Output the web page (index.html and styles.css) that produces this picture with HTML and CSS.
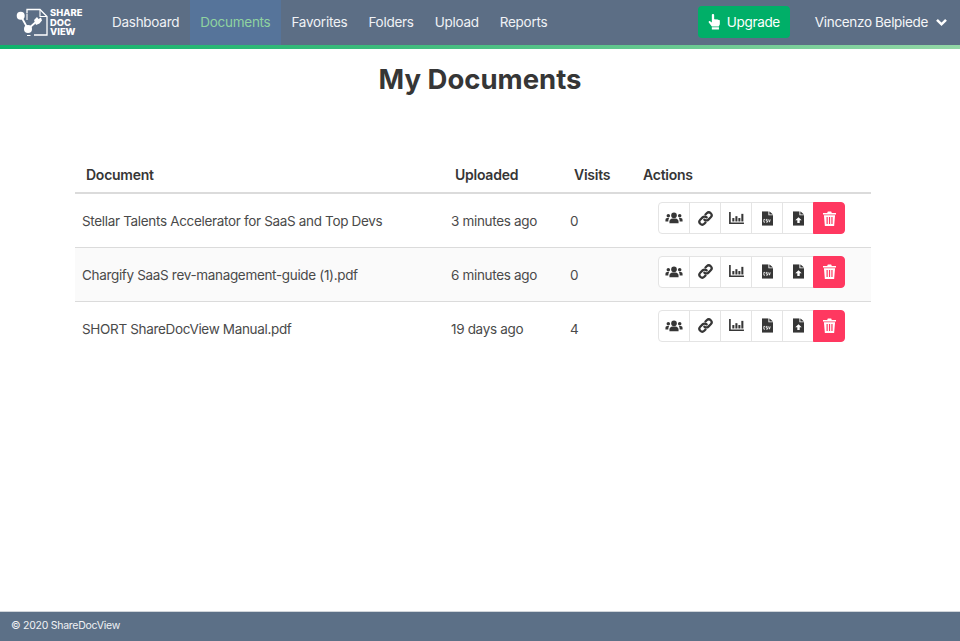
FILE: index.html
```html
<!DOCTYPE html>
<html lang="en">
<head>
<meta charset="utf-8">
<title>My Documents</title>
<link rel="stylesheet" href="styles.css">
</head>
<body>
<header class="navbar">
  <a class="brand">
    <svg class="brand-icon" viewBox="0 0 32 30" width="32" height="30">
      <path d="M11 5V1.500h13l7 7V27H18" fill="none" stroke="#fff" stroke-width="1.300"/>
      <path d="M24 1.500v7h7" fill="none" stroke="#fff" stroke-width="1.100"/>
      <path d="M11 5.500V12M14.500 27.500H11" fill="none" stroke="#fff" stroke-width="1.100"/>
      <path d="M4.700 7.700L12 21l9-8" fill="none" stroke="#fff" stroke-width="1.800"/>
      <circle cx="4.700" cy="7.700" r="4" fill="#fff"/>
      <circle cx="12" cy="21" r="4" fill="#fff"/>
      <path d="M18 12l3-3 1.500 2 2.500-1.500 1 3-2.500 3-3.500 1.500z" fill="#fff"/>
    </svg>
    <span class="brand-text">SHARE<br>DOC<br>VIEW</span>
  </a>
  <nav class="nav-links">
    <a class="nav-link">Dashboard</a>
    <a class="nav-link active">Documents</a>
    <a class="nav-link">Favorites</a>
    <a class="nav-link">Folders</a>
    <a class="nav-link">Upload</a>
    <a class="nav-link">Reports</a>
  </nav>
  <div class="nav-end">
    <a class="upgrade">
      <svg viewBox="0 0 14 18" width="13" height="16"><path fill="#fff" d="M4 1.200a1.300 1.300 0 0 1 2.600 0V6l1.100-.2 1 .4 1.200-.2 1.100.5L13 7v4.500L11.800 14H4L.6 9.500c-.7-1 .5-2.200 1.500-1.400L4 9.500zM4 15h8v2.500H4z"/></svg>
      <span>Upgrade</span>
    </a>
    <a class="user">
      <span>Vincenzo Belpiede</span>
      <svg viewBox="0 0 14 10" width="13" height="9"><path d="M2 2l5 5 5-5" fill="none" stroke="#fff" stroke-width="2.800"/></svg>
    </a>
  </div>
</header>
<div class="accent"></div>

<main class="content">
  <h1 class="title">My Documents</h1>
  <table class="docs">
    <colgroup><col class="c-doc"><col class="c-up"><col class="c-vis"><col class="c-act"></colgroup>
    <thead>
      <tr><th>Document</th><th>Uploaded</th><th>Visits</th><th>Actions</th></tr>
    </thead>
    <tbody>
      <tr>
        <td>Stellar Talents Accelerator for SaaS and Top Devs</td><td>3 minutes ago</td><td>0</td>
        <td class="action-cell"><div class="actions">
          <button class="act"><svg viewBox="0 0 20 16" width="18" height="14"><use href="#i-users"/></svg></button>
          <button class="act"><svg viewBox="0 0 16 16" width="15" height="15"><use href="#i-link"/></svg></button>
          <button class="act"><svg viewBox="0 0 16 14" width="15" height="13"><use href="#i-chart"/></svg></button>
          <button class="act"><svg viewBox="0 0 12 16" width="11" height="15"><use href="#i-csv"/></svg></button>
          <button class="act"><svg viewBox="0 0 12 16" width="11" height="15"><use href="#i-up"/></svg></button>
          <button class="act del"><svg viewBox="0 0 14 16" width="13" height="15"><use href="#i-trash"/></svg></button>
        </div></td>
      </tr>
      <tr>
        <td>Chargify SaaS rev-management-guide (1).pdf</td><td>6 minutes ago</td><td>0</td>
        <td class="action-cell"><div class="actions">
          <button class="act"><svg viewBox="0 0 20 16" width="18" height="14"><use href="#i-users"/></svg></button>
          <button class="act"><svg viewBox="0 0 16 16" width="15" height="15"><use href="#i-link"/></svg></button>
          <button class="act"><svg viewBox="0 0 16 14" width="15" height="13"><use href="#i-chart"/></svg></button>
          <button class="act"><svg viewBox="0 0 12 16" width="11" height="15"><use href="#i-csv"/></svg></button>
          <button class="act"><svg viewBox="0 0 12 16" width="11" height="15"><use href="#i-up"/></svg></button>
          <button class="act del"><svg viewBox="0 0 14 16" width="13" height="15"><use href="#i-trash"/></svg></button>
        </div></td>
      </tr>
      <tr>
        <td>SHORT ShareDocView Manual.pdf</td><td>19 days ago</td><td>4</td>
        <td class="action-cell"><div class="actions">
          <button class="act"><svg viewBox="0 0 20 16" width="18" height="14"><use href="#i-users"/></svg></button>
          <button class="act"><svg viewBox="0 0 16 16" width="15" height="15"><use href="#i-link"/></svg></button>
          <button class="act"><svg viewBox="0 0 16 14" width="15" height="13"><use href="#i-chart"/></svg></button>
          <button class="act"><svg viewBox="0 0 12 16" width="11" height="15"><use href="#i-csv"/></svg></button>
          <button class="act"><svg viewBox="0 0 12 16" width="11" height="15"><use href="#i-up"/></svg></button>
          <button class="act del"><svg viewBox="0 0 14 16" width="13" height="15"><use href="#i-trash"/></svg></button>
        </div></td>
      </tr>
    </tbody>
  </table>
</main>

<footer class="footer">© 2020 ShareDocView</footer>

<svg class="defs" width="0" height="0" aria-hidden="true">
  <symbol id="i-users" viewBox="0 0 20 16">
    <g fill="#363636">
      <circle cx="10" cy="5" r="3.200"/>
      <path d="M4.800 14v-2c0-2 1.600-3.500 3.400-3.500h3.600c1.800 0 3.400 1.500 3.400 3.500v2z"/>
      <circle cx="3.500" cy="5.500" r="2"/>
      <circle cx="16.500" cy="5.500" r="2"/>
      <path d="M0 12v-1.500C0 9 1 8 2.300 8h2.200C4 8.800 3.500 10 3.500 12zM20 12v-1.500C20 9 19 8 17.700 8h-2.200c.5.800 1 2 1 4z"/>
    </g>
  </symbol>
  <symbol id="i-link" viewBox="0 0 16 16">
    <g fill="none" stroke="#363636" stroke-width="2.400" stroke-linecap="round">
      <path d="M6.800 9.200a3 3 0 0 0 4.300 0l2.500-2.500a3 3 0 0 0-4.300-4.300L8 3.700"/>
      <path d="M9.200 6.800a3 3 0 0 0-4.300 0L2.400 9.300a3 3 0 0 0 4.300 4.300L8 12.300"/>
    </g>
  </symbol>
  <symbol id="i-chart" viewBox="0 0 16 14">
    <g fill="#363636">
      <path d="M0 0h1.800v11.200H16V13H0z"/>
      <rect x="3.500" y="6.500" width="2.200" height="3.700"/>
      <rect x="6.800" y="4.500" width="2.200" height="5.700"/>
      <rect x="10" y="6.500" width="2.200" height="3.700"/>
      <rect x="13.200" y="2" width="2.200" height="8.200"/>
    </g>
  </symbol>
  <symbol id="i-csv" viewBox="0 0 12 16">
    <path fill="#363636" d="M0 0h7v4.500h5V16H0zM8 0l4 3.500H8z"/>
    <path fill="none" stroke="#fff" stroke-width=".9" d="M3.300 9H2v3h1.300M6 9H4.500v1.500H6V12H4.500M7.200 9l.9 3 .9-3"/>
  </symbol>
  <symbol id="i-up" viewBox="0 0 12 16">
    <path fill="#363636" d="M0 0h7v4.500h5V16H0zM8 0l4 3.500H8z"/>
    <path fill="#fff" d="M6 6.500l3.500 3.500H7.300v3H4.700v-3H2.500z"/>
  </symbol>
  <symbol id="i-trash" viewBox="0 0 14 16">
    <path fill="#fff" d="M0 2h4.500l.7-1.500h3.600L9.500 2H14v1.700H0zM1 4.500h12L12 16H2zM3.800 6.500v7.500h1.300V6.500zM6.400 6.500v7.500h1.300V6.500zM9 6.500v7.500h1.300V6.500z" fill-rule="evenodd"/>
  </symbol>
</svg>
</body>
</html>
```

FILE: styles.css
```css
* { box-sizing: border-box; }
html, body { height: 100%; }
body {
  margin: 0;
  display: flex;
  flex-direction: column;
  min-height: 641px;
  font-family: Inter, "Liberation Sans", sans-serif;
  font-size: 13.500px;
  letter-spacing: -0.33px;
  color: #4a4a4a;
  background: #fff;
}
.navbar {
  display: flex;
  align-items: stretch;
  height: 45px;
  background: #5c6e85;
  color: #fff;
}
.brand {
  display: flex;
  align-items: center;
  gap: 2px;
  padding-left: 16px;
  width: 101.500px;
}
.brand-icon { flex: none; }
.brand-text {
  font-size: 9.400px;
  line-height: 9.500px;
  font-weight: 800;
  letter-spacing: 0;
}
.nav-links { display: flex; letter-spacing: -0.265px; }
.nav-link {
  display: flex;
  align-items: center;
  padding: 0 10.500px 2px;
  color: #f0f2f5;
}
.nav-link.active { background: #56749a; color: #8fd3a0; }
.nav-end {
  display: flex;
  align-items: center;
  margin-left: auto;
  padding: 0 12px 1px 0;
}
.upgrade {
  display: flex;
  align-items: center;
  gap: 6px;
  height: 32px;
  width: 92px;
  padding-left: 10px;
  margin-right: 25px;
  background: #00af68;
  border-radius: 4px;
}
.user { display: flex; align-items: center; gap: 7px; color: #f5f6f8; }
.accent {
  height: 4px;
  background: linear-gradient(90deg, #0fb36c 0%, #3dbb7c 40%, #93d7a6 100%);
}
.content { flex: 1; padding: 0 75px; }
.title {
  margin: 12px 0 0;
  height: 36px;
  font-size: 27.500px;
  line-height: 36px;
  font-weight: 700;
  letter-spacing: 0;
  text-align: center;
  color: #363636;
}
.docs {
  width: 796px;
  margin-top: 65px;
  border-collapse: collapse;
  table-layout: fixed;
}
.c-doc { width: 369px; }
.c-up { width: 119px; }
.c-vis { width: 69px; }
.c-act { width: 239px; }
.docs th {
  height: 31px;
  padding: 0 11px 6px;
  text-align: left;
  font-size: 14px;
  font-weight: 600;
  letter-spacing: -0.25px;
  color: #363636;
  border-bottom: 2px solid #dbdbdb;
}
.docs td {
  height: 54px;
  padding: 2px 7px 0;
  border-bottom: 1px solid #dbdbdb;
  vertical-align: middle;
}
.docs td.action-cell { padding-top: 8px; vertical-align: top; }
.docs tbody tr:nth-child(even) { background: #fafafa; }
.docs tbody tr:last-child td { border-bottom: 0; }
.actions { display: flex; justify-content: center; margin: 0 -7px; }
.act {
  display: flex;
  align-items: center;
  justify-content: center;
  width: 32px;
  height: 32px;
  margin-left: -1px;
  padding: 0;
  background: #fff;
  border: 1px solid #e4e4e4;
}
.act:first-child { margin-left: 0; border-radius: 4px 0 0 4px; }
.act.del {
  background: #ff3860;
  border-color: #ff3860;
  border-radius: 0 4px 4px 0;
}
.footer {
  height: 30px;
  flex: none;
  display: flex;
  align-items: center;
  padding: 0 0 2px 11px;
  font-size: 10.500px;
  letter-spacing: -0.26px;
  color: #f0f2f5;
  background: #5c7087;
  border-top: 1px solid #d0d5da;
}
.defs { position: absolute; }
```
